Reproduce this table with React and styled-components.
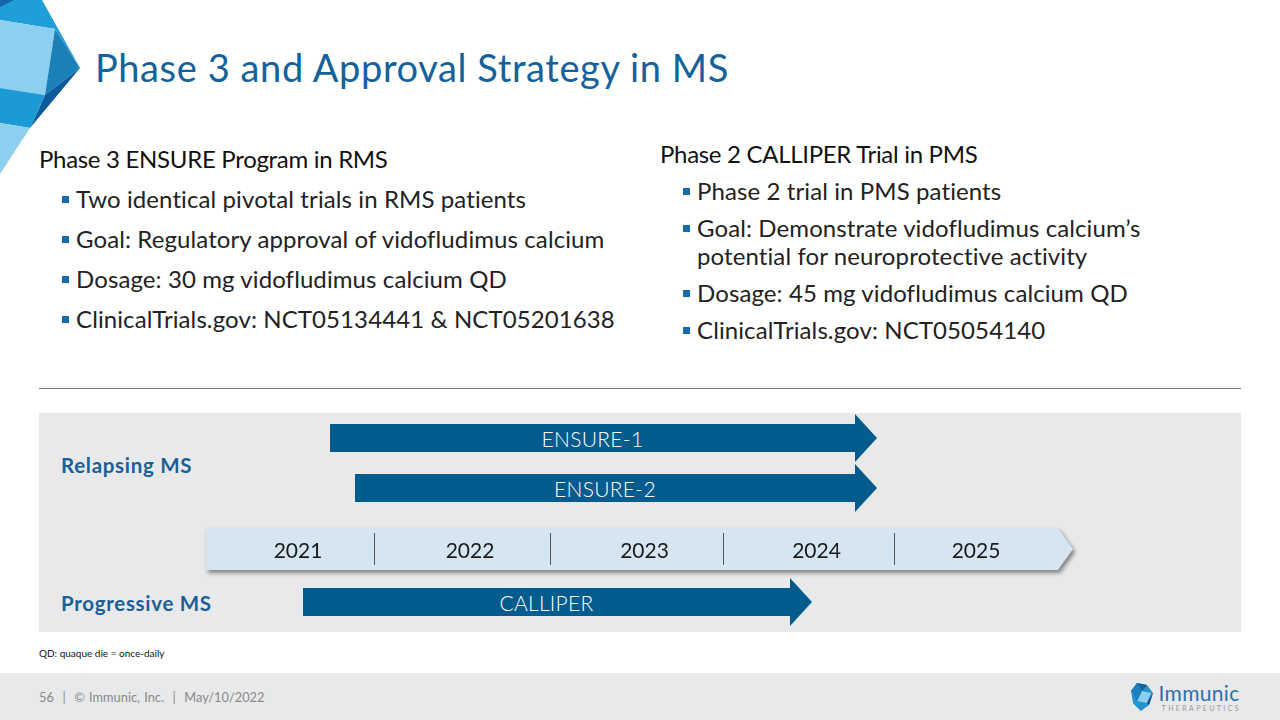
import React from 'react'
import styled, { createGlobalStyle } from 'styled-components'

const GlobalStyle = createGlobalStyle`
  html, body {
    margin: 0;
    padding: 0;
    background: #fff;
  }
  body {
    font-family: Lato, "Open Sans", sans-serif;
  }
`

const Slide = styled.div`
  position: relative;
  width: 1280px;
  height: 720px;
  overflow: hidden;
  display: flex;
  flex-direction: column;
  background: #fff;
`

const Corner = styled.svg`
  position: absolute;
  top: 0;
  left: 0;
  width: 82px;
  height: 176px;
`

const Header = styled.header`
  height: 140px;
  padding: 45px 0 0 95px;
  box-sizing: border-box;
`

const Title = styled.h1`
  margin: 0;
  font-family: Lato, sans-serif;
  font-weight: 400;
  font-size: 38px;
  line-height: 1.2;
  letter-spacing: 0.6px;
  color: #14619b;
`

const Columns = styled.section`
  height: 248px;
  display: grid;
  grid-template-columns: 621px 1fr;
  padding: 0 39px;
`

const Column = styled.div`
  padding-top: ${p => p.$top || 0}px;
`

const ColumnTitle = styled.h2`
  margin: 0;
  font-family: Lato, sans-serif;
  font-weight: 400;
  font-size: 24px;
  line-height: 28px;
  color: #111;
  letter-spacing: -0.3px;
`

const Bullets = styled.ul`
  list-style: none;
  margin: 0;
  padding: 0 0 0 37px;
  max-width: ${p => p.$max || 'none'};
`

const Bullet = styled.li`
  position: relative;
  margin-top: ${p => p.$gap}px;
  font-size: 24px;
  line-height: 28px;
  letter-spacing: 0.1px;
  color: #222;

  &::before {
    content: '';
    position: absolute;
    left: -14px;
    top: 11px;
    width: 7px;
    height: 7px;
    background: #1a6aa5;
  }
`

const Rule = styled.hr`
  margin: 0 39px;
  border: 0;
  border-top: 1px solid #7a7a7a;
`

const Panel = styled.section`
  margin: 24px 39px 0;
  height: 219px;
  box-sizing: border-box;
  background: #e8e9ea;
  display: grid;
  grid-template-columns: 145px 1fr;
  grid-template-rows: auto auto auto auto;
  align-content: start;
  padding: 1px 0 0 22px;
`

const TrackLabel = styled.div`
  grid-column: 1;
  grid-row: ${p => p.$rows};
  align-self: center;
  margin-top: ${p => p.$shift || 0}px;
  font-weight: 700;
  font-size: 20.5px;
  letter-spacing: 0.7px;
  color: #1a5f97;
  white-space: nowrap;
`

const Arrow = styled.div`
  grid-column: 2;
  grid-row: ${p => p.$row};
  margin-top: ${p => p.$gap}px;
  margin-left: ${p => p.$offset}px;
  width: ${p => p.$width}px;
  height: 48px;
  box-sizing: border-box;
  padding-right: 22px;
  background: #045b8e;
  clip-path: polygon(
    0 10px,
    calc(100% - 22px) 10px,
    calc(100% - 22px) 0,
    100% 24px,
    calc(100% - 22px) 48px,
    calc(100% - 22px) 38px,
    0 38px
  );
  display: flex;
  align-items: center;
  justify-content: center;
  color: #fff;
  font-family: Lato, sans-serif;
  font-weight: 300;
  font-size: 21px;
  letter-spacing: 0.3px;
`

const TimelineShadow = styled.div`
  grid-column: 2;
  grid-row: 3;
  margin-top: 16px;
  width: 867px;
  filter: drop-shadow(2px 3px 2px rgba(0, 0, 0, 0.45));
`

const Timeline = styled.div`
  height: 42px;
  display: flex;
  background: #d5e5f1;
  clip-path: polygon(0 0, calc(100% - 15px) 0, 100% 50%, calc(100% - 15px) 100%, 0 100%);
`

const Year = styled.div`
  width: ${p => p.$width}px;
  flex: ${p => (p.$width ? 'none' : 1)};
  padding: ${p => (p.$width ? '0 0 0 16px' : '0 15px 0 0')};
  box-sizing: border-box;
  display: flex;
  align-items: center;
  justify-content: center;
  font-family: Lato, sans-serif;
  font-weight: 400;
  font-size: 21px;
  color: #1a1a1a;
  background-image: ${p => (p.$first ? 'none' : 'linear-gradient(#555, #555)')};
  background-size: 1px 76%;
  background-position: left center;
  background-repeat: no-repeat;
`

const Footnote = styled.div`
  height: 41px;
  padding-left: 39px;
  display: flex;
  align-items: center;
  font-size: 10px;
  color: #111;
`

const Footer = styled.footer`
  flex: 1;
  background: #e8e9ea;
  display: flex;
  align-items: center;
  justify-content: space-between;
  padding: 0 39px;
`

const FooterText = styled.span`
  font-size: 12.8px;
  color: #8a8a8a;
  word-spacing: 1px;
`

const Brand = styled.div`
  display: flex;
  align-items: center;
  gap: 4px;
`

const BrandWords = styled.div`
  display: flex;
  flex-direction: column;
  line-height: 1;
`

const BrandName = styled.span`
  font-size: 21px;
  color: #2a70ad;
  letter-spacing: 0.3px;
`

const BrandSub = styled.span`
  font-size: 7px;
  color: #999;
  letter-spacing: 2.4px;
  margin-top: 2px;
  padding-left: 3px;
`

const left = [
  'Two identical pivotal trials in RMS patients',
  'Goal: Regulatory approval of vidofludimus calcium',
  'Dosage: 30 mg vidofludimus calcium QD',
  'ClinicalTrials.gov: NCT05134441 & NCT05201638'
]

const right = [
  'Phase 2 trial in PMS patients',
  'Goal: Demonstrate vidofludimus calcium\u2019s potential for neuroprotective activity',
  'Dosage: 45 mg vidofludimus calcium QD',
  'ClinicalTrials.gov: NCT05054140'
]

const years = [
  { year: '2021', width: 168 },
  { year: '2022', width: 176 },
  { year: '2023', width: 173 },
  { year: '2024', width: 171 },
  { year: '2025' }
]

const CornerArt = () => (
  <Corner viewBox='0 0 82 176'>
    <polygon points='0,0 42,0 80,68 55,29 0,20' fill='#1f9fd8' />
    <polygon points='0,0 14,0 0,7' fill='#1565a8' />
    <polygon points='0,20 55,29 45,95 0,88' fill='#8dcfee' />
    <polygon points='55,29 80,68 45,95' fill='#1b80b8' />
    <polygon points='80,68 45,95 30,128' fill='#0b5a9c' />
    <polygon points='0,88 45,95 30,128 0,123' fill='#1b9ad6' />
    <polygon points='0,123 30,128 0,174' fill='#8dcfee' />
  </Corner>
)

const BrandMark = () => (
  <svg width='26' height='32' viewBox='0 0 26 32'>
    <polygon points='8,2 18,4 24,12 20,24 12,30 4,22 2,10' fill='#2a8fcf' />
    <polygon points='8,2 18,4 13,10' fill='#14609f' />
    <polygon points='13,10 22,12 18,22 8,20' fill='#8dcfee' />
    <polygon points='18,22 24,12 20,24' fill='#0b4f8a' />
    <polygon points='4,22 12,30 10,21' fill='#1b9ad6' />
    <polygon points='2,10 8,2 13,10 8,20' fill='#1b80b8' />
  </svg>
)

export default function App () {
  return (
    <>
      <GlobalStyle />
      <Slide>
        <CornerArt />
        <Header>
          <Title>Phase 3 and Approval Strategy in MS</Title>
        </Header>

        <Columns>
          <Column $top={5}>
            <ColumnTitle>Phase 3 ENSURE Program in RMS</ColumnTitle>
            <Bullets>
              {left.map(t => <Bullet key={t} $gap={12}>{t}</Bullet>)}
            </Bullets>
          </Column>
          <Column>
            <ColumnTitle>Phase 2 CALLIPER Trial in PMS</ColumnTitle>
            <Bullets $max='500px'>
              {right.map(t => <Bullet key={t} $gap={9}>{t}</Bullet>)}
            </Bullets>
          </Column>
        </Columns>

        <Rule />

        <Panel>
          <TrackLabel $rows='1 / 3' $shift={4}>Relapsing MS</TrackLabel>
          <Arrow $row={1} $gap={0} $offset={124} $width={547}>ENSURE-1</Arrow>
          <Arrow $row={2} $gap={2} $offset={149} $width={522}>ENSURE-2</Arrow>
          <TimelineShadow>
            <Timeline>
              {years.map((y, i) => (
                <Year key={y.year} $width={y.width} $first={i === 0}>{y.year}</Year>
              ))}
            </Timeline>
          </TimelineShadow>
          <TrackLabel $rows='4' $shift={10}>Progressive MS</TrackLabel>
          <Arrow $row={4} $gap={8} $offset={97} $width={509}>CALLIPER</Arrow>
        </Panel>

        <Footnote>QD: quaque die = once-daily</Footnote>

        <Footer>
          <FooterText>56 &nbsp;| &nbsp;© Immunic, Inc. &nbsp;| &nbsp;May/10/2022</FooterText>
          <Brand>
            <BrandMark />
            <BrandWords>
              <BrandName>Immunic</BrandName>
              <BrandSub>THERAPEUTICS</BrandSub>
            </BrandWords>
          </Brand>
        </Footer>
      </Slide>
    </>
  )
}
